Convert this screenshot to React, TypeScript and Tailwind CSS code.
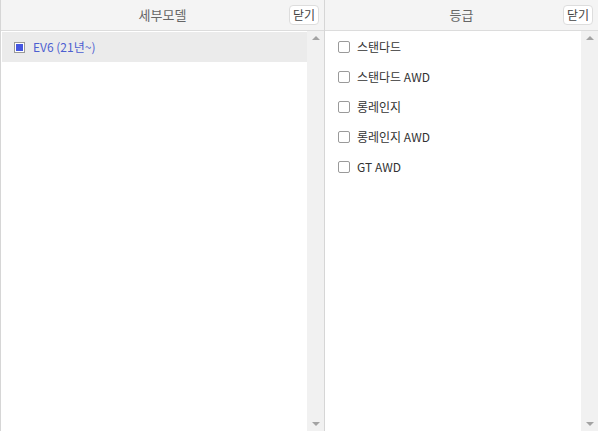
import React from 'react';

const font = { fontFamily: '"Noto Sans CJK KR", "Noto Sans", sans-serif' };

const Scrollbar = () => (
  <div className="w-[17px] shrink-0 bg-[#f1f1f1] flex flex-col justify-between items-center py-[5px]">
    <div className="w-0 h-0 border-l-[4px] border-r-[4px] border-b-[4px] border-l-transparent border-r-transparent border-b-[#a3a3a3]" />
    <div className="w-0 h-0 border-l-[4px] border-r-[4px] border-t-[4px] border-l-transparent border-r-transparent border-t-[#a3a3a3]" />
  </div>
);

const Header = ({ title }: { title: string }) => (
  <div className="relative h-[31px] shrink-0 bg-[#f4f4f4] border-b border-[#dcdcdc] flex items-center justify-center">
    <span className="text-[13px] text-[#666]">{title}</span>
    <button className="absolute right-[5px] top-[5px] h-[20px] px-[3px] bg-white border border-[#dddddd] rounded-[4px] text-[12px] leading-none text-[#444]">
      닫기
    </button>
  </div>
);

const grades = ['스탠다드', '스탠다드 AWD', '롱레인지', '롱레인지 AWD', 'GT AWD'];

export default function App() {
  return (
    <div className="flex w-[598px] h-[431px] bg-white overflow-hidden" style={font}>
      {/* 세부모델 */}
      <div className="w-[325px] flex flex-col border-l border-r border-[#d6d6d6]">
        <Header title="세부모델" />
        <div className="flex flex-1 min-h-0">
          <div className="flex-1 pt-[1px] pl-[1px]">
            <div className="h-[30px] bg-[#ebebeb] flex items-center pl-[12px] gap-[8px]">
              <span className="w-[11px] h-[11px] border border-[#999] bg-white flex items-center justify-center">
                <span className="w-[7px] h-[7px] bg-[#4556e0]" />
              </span>
              <span className="text-[12px] text-[#4d5fd1]">EV6 (21년~)</span>
            </div>
          </div>
          <Scrollbar />
        </div>
      </div>
      {/* 등급 */}
      <div className="flex-1 flex flex-col">
        <Header title="등급" />
        <div className="flex flex-1 min-h-0">
          <div className="flex-1 pt-[1px]">
            {grades.map((g) => (
              <label key={g} className="h-[30px] flex items-center pl-[13px] gap-[7px]">
                <span className="w-[12px] h-[12px] border border-[#9a9a9a] rounded-[2px] bg-white" />
                <span className="text-[12px] text-[#333]">{g}</span>
              </label>
            ))}
          </div>
          <Scrollbar />
        </div>
      </div>
    </div>
  );
}
